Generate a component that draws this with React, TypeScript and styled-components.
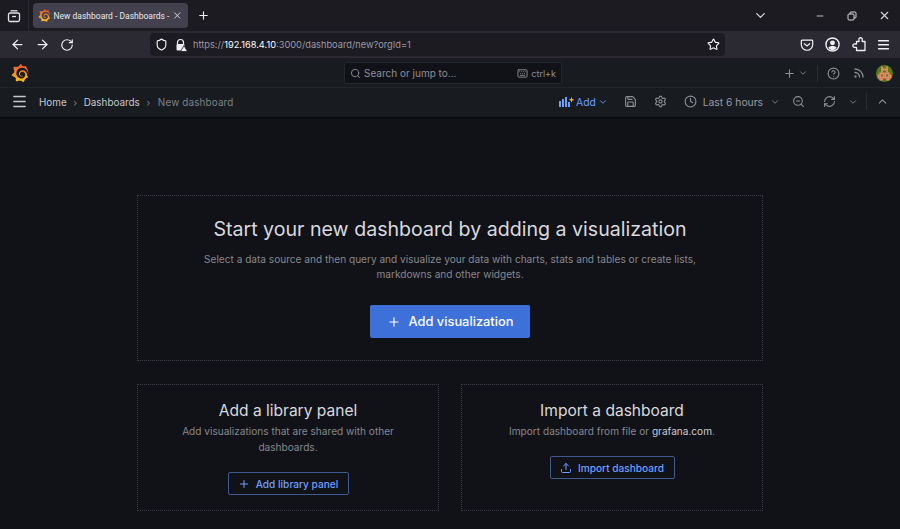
import React from "react";
import styled, { createGlobalStyle } from "styled-components";
import {
  ArrowLeft,
  ArrowRight,
  RotateCw,
  Star,
  Plus,
  ChevronDown,
  ChevronUp,
  Minus,
  X,
  Search,
  Keyboard,
  Save,
  Settings,
  Clock,
  ZoomOut,
  RefreshCw,
  Upload,
  Shield,
  Rss,
  CircleHelp,
  Menu,
} from "lucide-react";
import { SiGrafana } from "react-icons/si";

const GlobalStyle = createGlobalStyle`
  html, body { margin: 0; padding: 0; height: 100%; background: #111217; overflow: hidden; }
  #root { height: 100%; }
  * { box-sizing: border-box; }
`;

const Page = styled.div`
  width: 900px;
  height: 529px;
  display: flex;
  flex-direction: column;
  overflow: hidden;
  background: #111217;
  font-family: Inter, "Liberation Sans", sans-serif;
`;

const GradientDefs = styled.svg`
  display: block;
  width: 0;
  height: 0;
`;

/* browser chrome */
const TabStrip = styled.div`
  height: 31px;
  background: #1c1b22;
  display: flex;
  align-items: center;
  flex-shrink: 0;
`;

const TabGroup = styled.div`
  width: 29px;
  height: 31px;
  display: flex;
  align-items: center;
  justify-content: center;
  border-right: 1px solid #2b2a33;
  color: #e4e4e8;
  margin-right: 4px;
`;

const Tab = styled.div`
  width: 155px;
  height: 25px;
  background: #42414d;
  border-radius: 4px;
  display: flex;
  align-items: center;
  gap: 3px;
  padding: 0 5px 0 5px;
  color: #e8e8ec;
  font-family: Roboto, "Liberation Sans", sans-serif;
  font-size: 8.5px;
  white-space: nowrap;
`;

const TabTitle = styled.span`
  flex: 1;
`;

const NewTab = styled.div`
  width: 30px;
  display: flex;
  justify-content: center;
  color: #f0f0f3;
`;

const WindowControls = styled.div`
  margin-left: auto;
  display: flex;
  align-items: center;
  color: #d8d8dc;
`;

const WindowButton = styled.div<{ $width: number }>`
  width: ${({ $width }) => $width}px;
  display: flex;
  justify-content: center;
`;

const NavBar = styled.div`
  height: 28px;
  background: #2b2a33;
  display: flex;
  align-items: center;
  border-bottom: 1px solid #1c1b22;
  flex-shrink: 0;
  color: #f0f0f3;
`;

const NavButtons = styled.div`
  width: 150px;
  display: flex;
  align-items: center;
  gap: 10px;
  padding-left: 10px;
`;

const UrlBar = styled.div`
  width: 575px;
  height: 23px;
  background: #1c1b22;
  border-radius: 4px;
  display: flex;
  align-items: center;
  padding: 0 5px;
  font-size: 9.26px;
  color: #fbfbfe;
`;

const UrlIcons = styled.div`
  display: flex;
  align-items: center;
  gap: 6px;
  margin-right: 5px;
`;

const UrlText = styled.span`
  flex: 1;
  white-space: nowrap;
`;

const Dim = styled.span`
  color: #9a9aa2;
`;

const NavActions = styled.div`
  flex: 1;
  display: flex;
  align-items: center;
  justify-content: space-between;
  padding: 0 10px 0 75px;
`;

/* grafana top bars */
const TopNav = styled.div`
  height: 29px;
  background: #181b1f;
  border-bottom: 1px solid #24272c;
  display: grid;
  grid-template-columns: 344px 218px 1fr;
  align-items: center;
  flex-shrink: 0;
`;

const LogoCell = styled.div`
  padding-left: 11px;
  display: flex;
`;

const SearchBox = styled.div`
  height: 22px;
  background: #111217;
  border: 1px solid #24272c;
  border-radius: 2px;
  display: flex;
  align-items: center;
  padding: 0 5px;
  gap: 3px;
  color: #8e8e95;
  font-size: 10px;
`;

const SearchLabel = styled.span`
  flex: 1;
`;

const Shortcut = styled.span`
  display: flex;
  align-items: center;
  gap: 3px;
  font-size: 9px;
`;

const TopActions = styled.div`
  display: flex;
  align-items: center;
  justify-content: flex-end;
  color: #8e9096;
  padding-right: 7px;
`;

const PlusGroup = styled.div`
  display: flex;
  align-items: center;
  gap: 2px;
  padding-right: 9px;
  border-right: 1px solid #2a2d32;
  height: 17px;
  margin-right: 9px;
`;

const HelpIcons = styled.div`
  display: flex;
  align-items: center;
  gap: 13px;
  margin-right: 11px;
`;

const SubNav = styled.div`
  height: 29px;
  background: #181b1f;
  display: flex;
  align-items: center;
  padding: 0 0 2px 11px;
  flex-shrink: 0;
  box-shadow: 0 1px 2px #0a0b0e;
  color: #8e9096;
  font-size: 9.9px;
`;

const Crumbs = styled.div`
  display: flex;
  align-items: center;
  margin-left: 11px;
  flex: 1;
`;

const Crumb = styled.span<{ $current?: boolean }>`
  color: ${({ $current }) => ($current ? "#7f8187" : "#c6c8ce")};
  ${({ $current }) => $current && "letter-spacing: 0.15px; margin-left: 1px;"}
`;

const CrumbSep = styled.span`
  width: 17px;
  display: flex;
  justify-content: center;
  color: #7f8187;
`;

const Toolbar = styled.div`
  display: flex;
  align-items: center;
  padding-right: 11px;
`;

const AddButton = styled.div`
  display: flex;
  align-items: center;
  color: #6e9fff;
  font-size: 10.3px;
  gap: 2px;
  margin-right: 16px;
`;

const ToolIcon = styled.div<{ $gap: number }>`
  display: flex;
  align-items: center;
  margin-right: ${({ $gap }) => $gap}px;
`;

const TimeLabel = styled.span`
  color: #9a9ca2;
  font-size: 10.3px;
  margin: 0 7px 0 6px;
`;

const ToolDivider = styled.div`
  width: 1px;
  height: 17px;
  background: #2a2d32;
  margin: 0 9px 0 8px;
`;

/* dashboard body */
const Body = styled.main`
  flex: 1;
  padding: 78px 137px 0;
  display: flex;
  flex-direction: column;
  gap: 23px;
`;

const Panel = styled.section`
  border: 1px dotted #3a3d44;
  display: flex;
  flex-direction: column;
  align-items: center;
  text-align: center;
`;

const HeroPanel = styled(Panel)`
  height: 166px;
  padding-top: 19px;
`;

const CardRow = styled.div`
  display: grid;
  grid-template-columns: 302px 302px;
  justify-content: space-between;
`;

const CardPanel = styled(Panel)`
  height: 127px;
  padding-top: 15px;
`;

const HeroTitle = styled.h1`
  margin: 0;
  font-size: 19.6px;
  font-weight: 400;
  line-height: 28px;
  color: #d8d9de;
  white-space: nowrap;
`;

const CardTitle = styled.h2`
  margin: 0;
  font-size: 15.55px;
  font-weight: 400;
  line-height: 22px;
  color: #d8d9de;
`;

const Description = styled.p<{ $wide?: boolean }>`
  margin: ${({ $wide }) => ($wide ? "9px 0 0" : "1px 0 0")};
  font-size: 10.1px;
  line-height: ${({ $wide }) => ($wide ? "15px" : "16px")};
  color: #85878d;
  width: ${({ $wide }) => ($wide ? "520px" : "240px")};
`;

const GrafanaLink = styled.span`
  color: #c8cad0;
`;

const PrimaryButton = styled.div`
  margin-top: 23px;
  width: 160px;
  height: 33px;
  background: #3d71d9;
  border-radius: 2px;
  color: #fff;
  font-size: 12.85px;
  font-weight: 500;
  display: flex;
  align-items: center;
  justify-content: center;
  gap: 8px;
`;

const OutlineButton = styled.div<{ $width: number }>`
  margin-top: 17px;
  width: ${({ $width }) => $width}px;
  height: 23px;
  border: 1px solid #3f5a8e;
  border-radius: 2px;
  color: #6e9fff;
  font-size: 10.15px;
  font-weight: 500;
  display: flex;
  align-items: center;
  justify-content: center;
  gap: 6px;
`;

const AddPanelIcon = () => (
  <svg width="15" height="11" viewBox="0 0 15 11">
    <path fill="#6e9fff" d="M0 5h2v6H0zM3 3h2v8H3zM6 1h2v10H6zM9 6h2v5H9z" />
    <path fill="#f5a93c" d="M10.500 3h1.500V1.500h1V3h1.500v1.400H13V6h-1V4.400h-1.500z" />
  </svg>
);

const PocketIcon = () => (
  <svg width="14" height="14" viewBox="0 0 16 16" fill="none" stroke="#f0f0f3" strokeWidth="1.4">
    <path d="M2.500 2.500h11a1 1 0 0 1 1 1v4a6.500 6.500 0 0 1-13 0v-4a1 1 0 0 1 1-1z" />
    <path d="M5 6.500l3 2.500 3-2.500" strokeLinecap="round" />
  </svg>
);

const AccountIcon = () => (
  <svg width="15" height="15" viewBox="0 0 16 16">
    <circle cx="8" cy="8" r="7" fill="none" stroke="#f0f0f3" strokeWidth="1.500" />
    <circle cx="8" cy="6.200" r="2.600" fill="#f0f0f3" />
    <path fill="#f0f0f3" d="M3.500 11.500c1-1.500 2.500-2 4.500-2s3.500.5 4.500 2A6 6 0 0 1 8 14a6 6 0 0 1-4.500-2.500z" />
  </svg>
);

const ExtensionIcon = () => (
  <svg width="14" height="15" viewBox="0 0 14 15" fill="none" stroke="#f0f0f3" strokeWidth="1.300" strokeLinejoin="round">
    <path d="M7 4.500V3a1.700 1.700 0 1 1 3.200 0v1.500h2.800v9H4.500v-3.200H3a1.700 1.700 0 1 1 0-3.300h1.500V4.500z" />
  </svg>
);

const BurgerIcon = () => (
  <svg width="13" height="12" viewBox="0 0 13 12" fill="#f0f0f3">
    <rect x="1" y="1" width="11" height="1.600" rx=".5" />
    <rect x="1" y="5" width="11" height="1.600" rx=".5" />
    <rect x="1" y="9" width="11" height="1.600" rx=".5" />
  </svg>
);

const TabsIcon = () => (
  <svg width="14" height="14" viewBox="0 0 14 14" fill="none" stroke="currentColor" strokeWidth="1.3">
    <rect x="1.500" y="4" width="11" height="8.500" rx="1.500" />
    <path d="M3.500 1.800h7" />
    <path d="M5 7.500h4" />
  </svg>
);

const LockIcon = () => (
  <svg width="14" height="14" viewBox="0 0 14 14" fill="none">
    <path d="M3.500 6V4.500a3 3 0 0 1 6 0V6" stroke="#f0f0f3" strokeWidth="1.200" />
    <rect x="2.500" y="6" width="8" height="6.500" rx="1" fill="#f0f0f3" />
    <path d="M10 7.500l3.500 6h-7z" fill="#f0f0f3" stroke="#1c1b22" strokeWidth=".8" />
  </svg>
);

const RestoreIcon = () => (
  <svg width="10" height="10" viewBox="0 0 10 10" fill="none" stroke="currentColor" strokeWidth="1">
    <rect x="1" y="3" width="6" height="6" rx="1" />
    <path d="M3 3V2a1 1 0 0 1 1-1h4a1 1 0 0 1 1 1v4a1 1 0 0 1-1 1H7" />
  </svg>
);

// identicon avatar, one char per cell
const AVATAR_ROWS = ["..p..p..", "..pppp..", "..p..p..", ".pppppp.", "pp.pp.pp", "pppppppp", ".pp..pp."];

const Avatar = () => (
  <svg width="17" height="17" viewBox="0 0 17 17">
    <circle cx="8.500" cy="8.500" r="8.500" fill="#5a7a14" />
    {AVATAR_ROWS.map((row, y) =>
      row.split("").map((c, x) =>
        c === "p" ? (
          <rect key={`${x}-${y}`} x={x * 1.7 + 1.700} y={y * 2 + 1.500} width="1.700" height="2" fill="#f58a78" />
        ) : null
      )
    )}
  </svg>
);

export default function App() {
  return (
    <Page>
      <GlobalStyle />
      <GradientDefs aria-hidden="true">
        <defs>
          <linearGradient id="grafana-fill" x1="0" y1="1" x2="0" y2="0">
            <stop offset="0" stopColor="#fcc21f" />
            <stop offset="1" stopColor="#f1562a" />
          </linearGradient>
        </defs>
      </GradientDefs>
      <TabStrip>
        <TabGroup>
          <TabsIcon />
        </TabGroup>
        <Tab>
          <SiGrafana size={13} fill="url(#grafana-fill)" />
          <TabTitle>New dashboard - Dashboards -</TabTitle>
          <X size={11} />
        </Tab>
        <NewTab>
          <Plus size={13} />
        </NewTab>
        <WindowControls>
          <WindowButton $width={88}>
            <ChevronDown size={15} />
          </WindowButton>
          <WindowButton $width={32}>
            <Minus size={10} />
          </WindowButton>
          <WindowButton $width={32}>
            <RestoreIcon />
          </WindowButton>
          <WindowButton $width={32}>
            <X size={13} />
          </WindowButton>
        </WindowControls>
      </TabStrip>

      <NavBar>
        <NavButtons>
          <ArrowLeft size={15} />
          <ArrowRight size={15} />
          <RotateCw size={14} />
        </NavButtons>
        <UrlBar>
          <UrlIcons>
            <Shield size={13} />
            <LockIcon />
          </UrlIcons>
          <UrlText>
            <Dim>https://</Dim>192.168.4.10<Dim>:3000/dashboard/new?orgId=1</Dim>
          </UrlText>
          <Star size={13} />
        </UrlBar>
        <NavActions>
          <PocketIcon />
          <AccountIcon />
          <ExtensionIcon />
          <BurgerIcon />
        </NavActions>
      </NavBar>

      <TopNav>
        <LogoCell>
          <SiGrafana size={18} fill="url(#grafana-fill)" />
        </LogoCell>
        <SearchBox>
          <Search size={11} />
          <SearchLabel>Search or jump to...</SearchLabel>
          <Shortcut>
            <Keyboard size={11} />
            ctrl+k
          </Shortcut>
        </SearchBox>
        <TopActions>
          <PlusGroup>
            <Plus size={13} />
            <ChevronDown size={10} />
          </PlusGroup>
          <HelpIcons>
            <CircleHelp size={13} />
            <Rss size={12} strokeWidth={2.6} />
          </HelpIcons>
          <Avatar />
        </TopActions>
      </TopNav>

      <SubNav>
        <Menu size={17} color="#c6c8ce" />
        <Crumbs>
          <Crumb>Home</Crumb>
          <CrumbSep>›</CrumbSep>
          <Crumb>Dashboards</Crumb>
          <CrumbSep>›</CrumbSep>
          <Crumb $current>New dashboard</Crumb>
        </Crumbs>
        <Toolbar>
          <AddButton>
            <AddPanelIcon />
            Add
            <ChevronDown size={10} color="#6e9fff" />
          </AddButton>
          <ToolIcon $gap={17}>
            <Save size={13} />
          </ToolIcon>
          <ToolIcon $gap={17}>
            <Settings size={13} />
          </ToolIcon>
          <Clock size={13} />
          <TimeLabel>Last 6 hours</TimeLabel>
          <ToolIcon $gap={12}>
            <ChevronDown size={10} />
          </ToolIcon>
          <ToolIcon $gap={18}>
            <ZoomOut size={13} />
          </ToolIcon>
          <ToolIcon $gap={12}>
            <RefreshCw size={13} />
          </ToolIcon>
          <ChevronDown size={10} />
          <ToolDivider />
          <ChevronUp size={13} />
        </Toolbar>
      </SubNav>

      <Body>
        <HeroPanel>
          <HeroTitle>Start your new dashboard by adding a visualization</HeroTitle>
          <Description $wide>
            Select a data source and then query and visualize your data with charts, stats and tables or create lists,
            markdowns and other widgets.
          </Description>
          <PrimaryButton>
            <Plus size={14} />
            Add visualization
          </PrimaryButton>
        </HeroPanel>
        <CardRow>
          <CardPanel>
            <CardTitle>Add a library panel</CardTitle>
            <Description>Add visualizations that are shared with other dashboards.</Description>
            <OutlineButton $width={121}>
              <Plus size={12} />
              Add library panel
            </OutlineButton>
          </CardPanel>
          <CardPanel>
            <CardTitle>Import a dashboard</CardTitle>
            <Description>
              Import dashboard from file or <GrafanaLink>grafana.com</GrafanaLink>.
            </Description>
            <OutlineButton $width={125}>
              <Upload size={12} />
              Import dashboard
            </OutlineButton>
          </CardPanel>
        </CardRow>
      </Body>
    </Page>
  );
}
